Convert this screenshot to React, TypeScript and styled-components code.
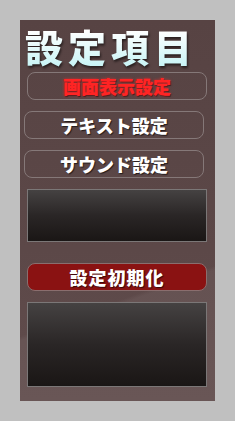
import React from "react";
import styled, { createGlobalStyle } from "styled-components";

const Global = createGlobalStyle`
  html, body { margin: 0; padding: 0; background: #c0c0c0; }
  body { font-family: "Noto Sans CJK JP", "Liberation Sans", sans-serif; }
`;

const Page = styled.div`
  padding: 20px 0 0 20px;
`;

const Panel = styled.div`
  width: 195px;
  height: 381px;
  box-sizing: border-box;
  background:
    linear-gradient(160deg, rgba(255,255,255,0) 70%, rgba(255,255,255,0.05) 71%, rgba(255,255,255,0.05) 100%),
    linear-gradient(180deg, #574343 0%, #5c4848 60%, #614d4d 100%);
  display: flex;
  flex-direction: column;
  padding: 0 0 0 4px;
`;

const Title = styled.h1`
  margin: 0;
  height: 52px;
  display: flex;
  align-items: center;
  padding-left: 1px;
  font-family: "Noto Sans CJK JP", sans-serif;
  font-weight: 900;
  font-size: 38px;
  letter-spacing: 5px;
  line-height: 1;
  color: #f2ffff;
  background: linear-gradient(180deg, #ffffff 20%, #c8f4f6 90%);
  -webkit-background-clip: text;
  background-clip: text;
  -webkit-text-fill-color: transparent;
  filter: drop-shadow(1px 2px 1px rgba(0,0,0,0.55));
`;

const MenuButton = styled.div<{ $shift: number; $red?: boolean; $fill?: boolean }>`
  box-sizing: border-box;
  width: 180px;
  height: 28px;
  margin-left: ${(p) => p.$shift}px;
  border: 1px solid ${(p) => (p.$fill ? "#8a6e6e" : "#857878")};
  border-radius: 8px;
  background: ${(p) => (p.$fill ? "#8a1212" : "transparent")};
  display: flex;
  align-items: center;
  justify-content: center;
  font-family: "Noto Sans CJK JP", sans-serif;
  font-weight: 900;
  font-size: 18px;
  line-height: 1;
  letter-spacing: ${(p) => (p.$fill ? "1px" : "0px")};
  color: ${(p) => (p.$red ? "#ff2424" : "#ffffff")};
  text-shadow: ${(p) =>
    p.$red
      ? "0 0 3px rgba(255,40,40,0.7), 1px 1px 1px rgba(0,0,0,0.6)"
      : "1px 1px 1px rgba(0,0,0,0.6)"};
  margin-top: ${(p) => (p.$fill ? "21px" : "0")};
`;

const Stack = styled.div`
  display: flex;
  flex-direction: column;
  gap: 11px;
`;

const InfoBox = styled.div<{ $h: number }>`
  box-sizing: border-box;
  width: 180px;
  height: ${(p) => p.$h}px;
  margin-left: 3px;
  border: 1px solid #7b7777;
  background: linear-gradient(180deg, #454242 0%, #2a2626 50%, #1a1615 100%);
`;

export default function App() {
  return (
    <>
      <Global />
      <Page>
        <Panel>
          <Title>設定項目</Title>
          <Stack>
            <MenuButton $shift={3} $red>画面表示設定</MenuButton>
            <MenuButton $shift={0}>テキスト設定</MenuButton>
            <MenuButton $shift={0}>サウンド設定</MenuButton>
            <InfoBox $h={53} />
          </Stack>
          <Stack>
            <MenuButton $shift={3} $fill>設定初期化</MenuButton>
            <InfoBox $h={85} />
          </Stack>
        </Panel>
      </Page>
    </>
  );
}
